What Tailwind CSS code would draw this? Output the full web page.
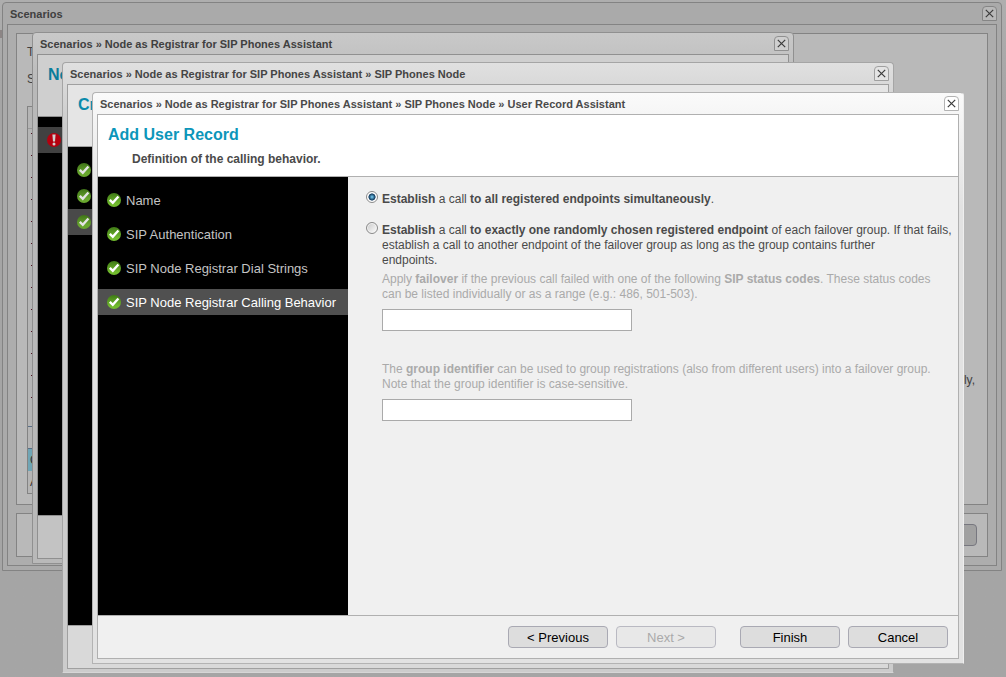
<!DOCTYPE html>
<html lang="en">
<head>
    <meta charset="UTF-8">
    <meta name="viewport" content="width=device-width, initial-scale=1.0">
    <title>User Record Assistant</title>
    <script src="https://cdn.jsdelivr.net/npm/@tailwindcss/browser@4"></script>
</head>
<body class="relative h-screen overflow-hidden bg-linear-to-b from-[#aeaeae] to-[#a5a5a5] to-15% font-['Liberation_Sans',Arial,sans-serif] text-xs text-[#4a4a4a]">
    <svg class="absolute size-0">
        <defs>
            <linearGradient id="green" x1="0" y1="0" x2="0" y2="1">
                <stop offset="0" stop-color="#3f7a16" />
                <stop offset=".8" stop-color="#72bb2e" />
            </linearGradient>
            <linearGradient id="greenDim" x1="0" y1="0" x2="0" y2="1">
                <stop offset="0" stop-color="#3f7318" />
                <stop offset=".7" stop-color="#68a62e" />
            </linearGradient>
            <symbol id="check" viewBox="0 0 14 14">
                <circle cx="7" cy="7" r="7" fill="url(#green)" />
                <path d="M2.8 6.8 5.8 9.8l5.6-6.3" fill="none" stroke="#fff" stroke-width="2.4" />
            </symbol>
            <symbol id="check-dim" viewBox="0 0 14 14">
                <circle cx="7" cy="7" r="7" fill="url(#greenDim)" />
                <path d="M2.8 6.8 5.8 9.8l5.6-6.3" fill="none" stroke="#e4e4e4" stroke-width="2.4" />
            </symbol>
            <symbol id="error" viewBox="0 0 14 14">
                <circle cx="7" cy="7" r="7" fill="#b5000f" />
                <path d="M5.4 1.5h3.2L8 8.6H6z" fill="#d0d0d0" />
                <circle cx="7" cy="11" r="1.5" fill="#d0d0d0" />
            </symbol>
            <symbol id="close" viewBox="0 0 9 9">
                <path d="M.8.8l7.4 7.4M8.2.8.8 8.2" fill="none" stroke="#3c3c3c" stroke-width="1.2" />
            </symbol>
        </defs>
    </svg>

    <div class="absolute top-[30px] left-0 h-2 w-0.5 bg-[#8c8585]"></div>

    <!-- Scenarios -->
    <section class="absolute top-[2px] right-1 left-[2px] flex h-[569px] flex-col rounded-t border border-[#838383] bg-[#aaaaaa] px-1 pb-1">
        <header class="flex h-[21px] shrink-0 items-center justify-between">
            <h2 class="pt-px pl-[3px] text-[11px] font-bold text-[#404040]">Scenarios</h2>
            <button aria-label="Close" class="grid h-[15px] w-[15px] place-items-center rounded-t-sm border border-[#858585] bg-[#b8b8b8]"><svg class="size-[9px]"><use href="#close" /></svg></button>
        </header>
        <div class="flex flex-1 flex-col gap-2 border border-[#838383] bg-[#adadad] p-2">
            <div class="flex flex-1 flex-col border border-[#838383] bg-[#b9b9b9] px-[10px] pt-[11px] text-[#404040]">
                <p class="leading-[15px]">T</p>
                <p class="mt-3 leading-[15px]">S</p>
                <div class="mt-[19px] flex h-[388px] w-32 flex-col border border-[#838383] bg-[#b5b5b5]">
                    <div class="h-[22px] border-b border-[#999]"></div>
                    <div class="pt-1 pl-[3px]">
                        <div class="h-[22px]"><i class="block size-px bg-[#501020]"></i></div>
                        <div class="h-[22px]"><i class="block size-px bg-[#501020]"></i></div>
                        <div class="h-[22px]"><i class="block size-px bg-[#501020]"></i></div>
                        <div class="h-[22px]"><i class="block size-px bg-[#501020]"></i></div>
                        <div class="h-[22px]"><i class="block size-px bg-[#501020]"></i></div>
                        <div class="h-[22px]"><i class="block size-px bg-[#501020]"></i></div>
                        <div class="h-[22px]"><i class="block size-px bg-[#501020]"></i></div>
                        <div class="h-[22px]"><i class="block size-px bg-[#501020]"></i></div>
                        <div class="h-[22px]"><i class="block size-px bg-[#501020]"></i></div>
                        <div class="h-[22px]"><i class="block size-px bg-[#501020]"></i></div>
                        <div class="h-[22px]"><i class="block size-px bg-[#501020]"></i></div>
                        <div class="h-[22px]"><i class="block size-px bg-[#501020]"></i></div>
                        <div class="h-[22px]"><i class="block size-px bg-[#501020]"></i></div>
                    </div>
                    <div class="mt-[7px] h-[23px] border-y border-[#5a6f88]"></div>
                    <div class="h-[22px] bg-[#6fa5b5] pl-[2px] leading-[22px] text-[#303030]">C</div>
                    <div class="flex-1 pl-[2px] leading-[22px] text-[#303030]">A</div>
                </div>
            </div>
            <div class="flex h-11 items-center justify-end border border-[#838383] bg-[#b9b9b9] pr-[10px]">
                <button aria-label="Cancel" class="h-[22px] w-[100px] rounded-sm border border-[#77777f] bg-[#a1a1a1]"></button>
            </div>
        </div>
        <p class="absolute top-[370px] right-[26px] leading-[15px] text-[#404040]">ly,</p>
    </section>

    <!-- Registrar assistant -->
    <section class="absolute top-[32px] left-[32px] flex h-[532px] w-[762px] flex-col rounded-t border border-[#909090] bg-[#bbbbbb] bg-linear-to-b from-[#c9c9c9] to-[#b9b9b9] to-10% px-1 pb-1">
        <header class="flex h-[21px] shrink-0 items-center justify-between">
            <h2 class="pt-px pl-[3px] text-[11px] font-bold text-[#404040]">Scenarios » Node as Registrar for SIP Phones Assistant</h2>
            <button aria-label="Close" class="grid h-[15px] w-[15px] place-items-center rounded-t-sm border border-[#909090] bg-[#cfcfcf]"><svg class="size-[9px]"><use href="#close" /></svg></button>
        </header>
        <div class="flex flex-1 flex-col border border-[#909090] bg-[#c3c3c3]">
            <div class="h-[62px] border-b border-[#909090] bg-[#cfcfcf] px-[10px] pt-[10px]">
                <h1 class="text-base leading-5 font-bold text-[#0a7d9b]">Node</h1>
            </div>
            <div class="h-[398px] w-[250px] bg-black pt-[10px]">
                <div class="flex h-[26px] items-center bg-[#414141] pl-[9px]"><svg class="size-[14px]"><use href="#error" /></svg></div>
            </div>
            <div class="flex-1 border-t border-[#909090]"></div>
        </div>
    </section>

    <!-- SIP phones node -->
    <section class="absolute top-[62px] left-[62px] flex h-[611px] w-[832px] flex-col rounded-t border border-[#a5a5a5] border-b-[#d6d6d6] bg-[#cccccc] bg-linear-to-b from-[#e0e0e0] to-[#cccccc] to-10% px-1 pb-[3px]">
        <header class="flex h-[21px] shrink-0 items-center justify-between">
            <h2 class="pt-px pl-[3px] text-[11px] font-bold text-[#454545]">Scenarios » Node as Registrar for SIP Phones Assistant » SIP Phones Node</h2>
            <button aria-label="Close" class="grid h-[15px] w-[15px] place-items-center rounded-t-sm border border-[#a0a0a0] bg-[#e4e4e4]"><svg class="size-[9px]"><use href="#close" /></svg></button>
        </header>
        <div class="flex flex-1 flex-col border border-[#a0a0a0] bg-[#d9d9d9]">
            <div class="h-[62px] border-b border-[#a0a0a0] bg-[#e5e5e5] px-[10px] pt-[10px]">
                <h1 class="text-base leading-5 font-bold text-[#0a8aab]">Create</h1>
            </div>
            <div class="h-[478px] w-[250px] bg-black pt-[10px]">
                <div class="flex h-[26px] items-center pl-[9px]"><svg class="size-[14px]"><use href="#check-dim" /></svg></div>
                <div class="flex h-[26px] items-center pl-[9px]"><svg class="size-[14px]"><use href="#check-dim" /></svg></div>
                <div class="flex h-[26px] items-center bg-[#494949] pl-[9px]"><svg class="size-[14px]"><use href="#check-dim" /></svg></div>
            </div>
            <div class="flex-1 border-t border-[#a0a0a0]"></div>
        </div>
    </section>

    <!-- User record assistant -->
    <section class="absolute top-[92px] left-[92px] flex h-[572px] w-[872px] flex-col rounded-t border border-[#b3b3b3] border-r-[#eeeeee] bg-[#e2e2e2] bg-linear-to-b from-[#fafafa] to-[#e2e2e2] to-20% px-1 pb-1">
        <header class="flex h-[21px] shrink-0 items-center justify-between">
            <h2 class="pt-px pl-[3px] text-[11px] font-bold">Scenarios » Node as Registrar for SIP Phones Assistant » SIP Phones Node » User Record Assistant</h2>
            <button aria-label="Close" class="grid h-[15px] w-[15px] place-items-center rounded-t-sm border border-[#b3b3b3] bg-white"><svg class="size-[9px]"><use href="#close" /></svg></button>
        </header>
        <form class="flex flex-1 flex-col border border-[#b0b0b0] bg-[#f0f0f0]">
            <div class="h-[62px] border-b border-[#b0b0b0] bg-white px-[10px] pt-[10px]">
                <h1 class="text-base leading-5 font-bold text-[#0c96ba]">Add User Record</h1>
                <p class="mt-[7px] pl-6 leading-[15px] font-bold">Definition of the calling behavior.</p>
            </div>
            <div class="flex flex-1">
                <ol class="flex w-[250px] shrink-0 flex-col gap-2 bg-black pt-[10px] text-[13px] text-[#c4c4c4]">
                    <li class="flex h-[26px] items-center gap-[5px] pl-[9px]"><svg class="size-[14px]"><use href="#check" /></svg><span class="pt-[2px]">Name</span></li>
                    <li class="flex h-[26px] items-center gap-[5px] pl-[9px]"><svg class="size-[14px]"><use href="#check" /></svg><span class="pt-[2px]">SIP Authentication</span></li>
                    <li class="flex h-[26px] items-center gap-[5px] pl-[9px]"><svg class="size-[14px]"><use href="#check" /></svg><span class="pt-[2px]">SIP Node Registrar Dial Strings</span></li>
                    <li class="flex h-[26px] items-center gap-[5px] bg-[#505050] pl-[9px] text-white"><svg class="size-[14px]"><use href="#check" /></svg><span class="pt-[2px]">SIP Node Registrar Calling Behavior</span></li>
                </ol>
                <div class="flex flex-1 flex-col pt-[14px] pl-[18px] leading-[15px]">
                    <div class="flex gap-1">
                        <input type="radio" id="all" name="behavior" checked class="size-3 shrink-0 appearance-none rounded-full border border-[#8a8a8a] bg-white bg-radial from-[#7fd8ff] from-0% via-[#123a5c] via-45% to-white to-55%">
                        <label for="all" class="pt-px"><b>Establish</b> a call <b>to all registered endpoints simultaneously</b>.</label>
                    </div>
                    <div class="mt-[15px] flex gap-1">
                        <input type="radio" id="one" name="behavior" class="size-3 shrink-0 appearance-none rounded-full border border-[#8a8a8a] bg-linear-to-br from-[#c8c8c8] to-white shadow-[inset_0_0_0_1px_#f4f4f4]">
                        <label for="one" class="pt-px"><b>Establish</b> a call <b>to exactly one randomly chosen registered endpoint</b> of each failover group. If that fails, establish a call to another endpoint of the failover group as long as the group contains further<br>endpoints.</label>
                    </div>
                    <div class="mt-[3px] flex flex-col items-start pr-[10px] pl-4 text-[#aaaaaa]">
                        <label for="codes" class="pt-px">Apply <b>failover</b> if the previous call failed with one of the following <b>SIP status codes</b>. These status codes can be listed individually or as a range (e.g.: 486, 501-503).</label>
                        <input id="codes" type="text" class="mt-[7px] h-[22px] w-[250px] border border-[#aaaaaa] bg-white px-1">
                        <label for="group" class="mt-[30px] pt-px">The <b>group identifier</b> can be used to group registrations (also from different users) into a failover group. Note that the group identifier is case-sensitive.</label>
                        <input id="group" type="text" class="mt-[7px] h-[22px] w-[250px] border border-[#aaaaaa] bg-white px-1">
                    </div>
                </div>
            </div>
            <div class="flex h-[43px] justify-end gap-2 border-t border-[#b0b0b0] pt-[10px] pr-[10px] text-[13px] text-black">
                <button type="button" class="h-[22px] w-[100px] rounded-sm border border-[#a9a9b3] bg-[#dddddd] pt-[2px]">&lt; Previous</button>
                <button type="button" disabled class="h-[22px] w-[100px] rounded-sm border border-[#b9b9c2] bg-[#e8e8e8] pt-[2px] text-[#aaaaaa]">Next &gt;</button>
                <button type="submit" class="ml-4 h-[22px] w-[100px] rounded-sm border border-[#a9a9b3] bg-[#dddddd] pt-[2px]">Finish</button>
                <button type="button" class="h-[22px] w-[100px] rounded-sm border border-[#a9a9b3] bg-[#dddddd] pt-[2px]">Cancel</button>
            </div>
        </form>
    </section>
</body>
</html>
